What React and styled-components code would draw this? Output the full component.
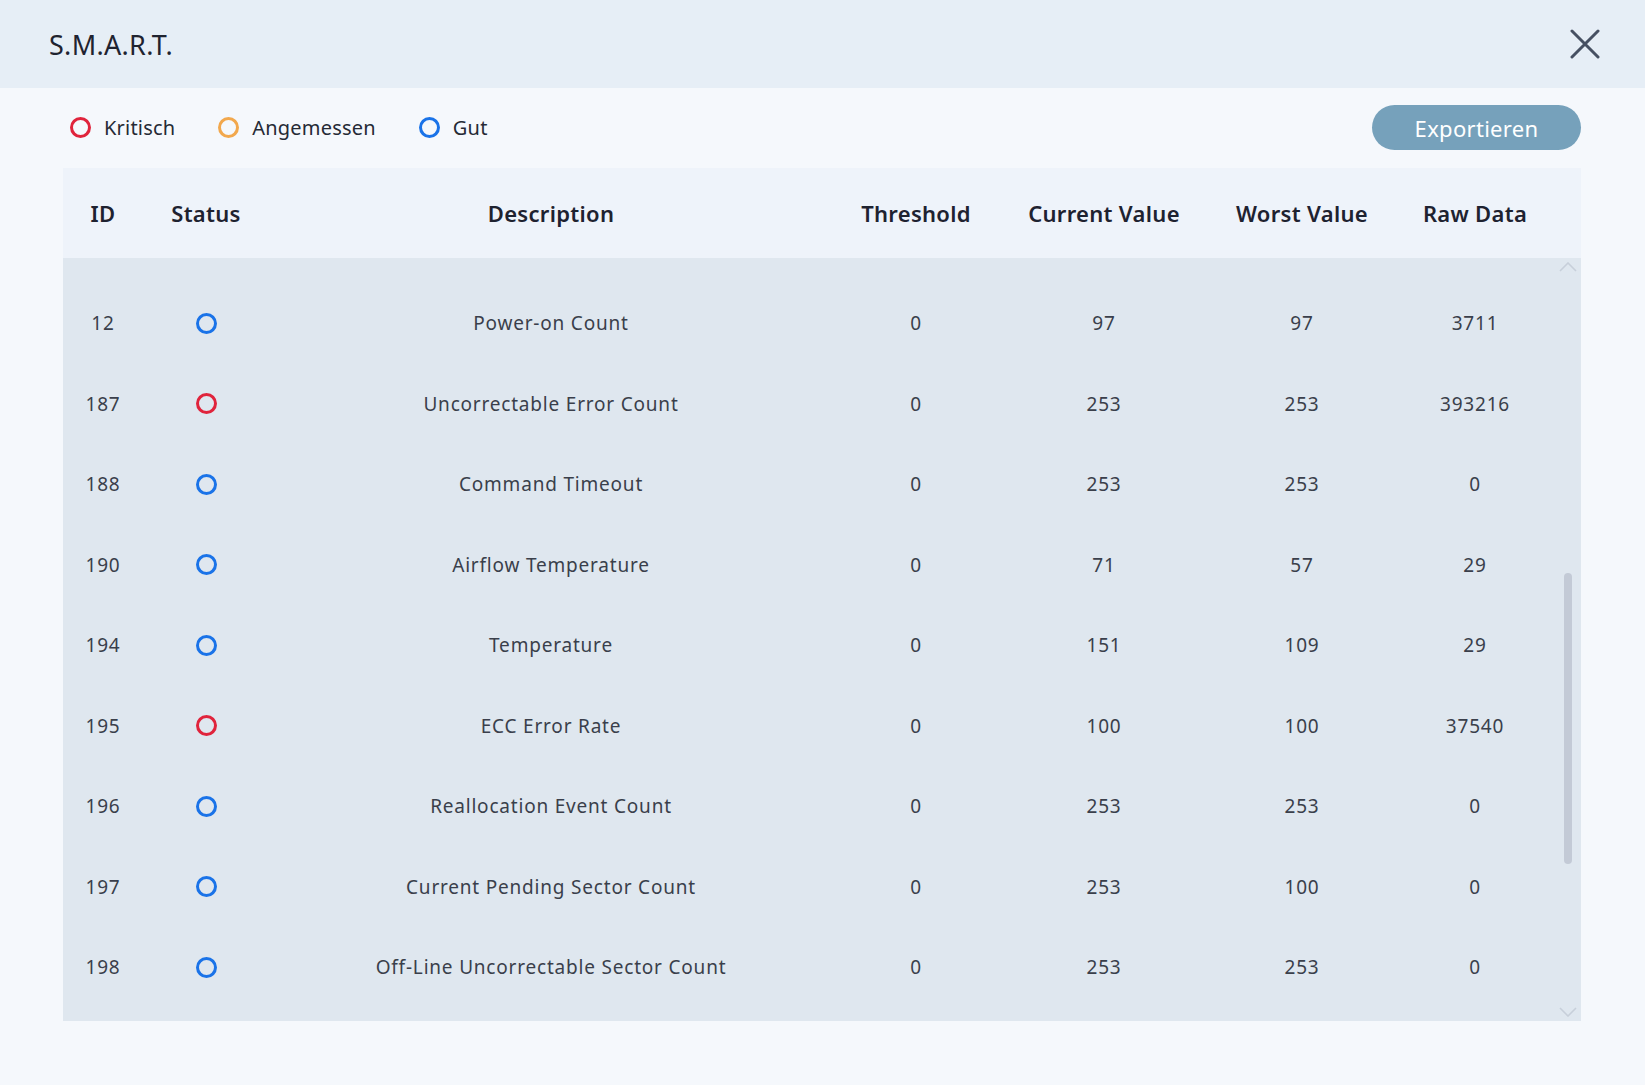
import React from "react";
import styled, { createGlobalStyle } from "styled-components";

const GlobalStyle = createGlobalStyle`
  html, body {
    margin: 0;
    padding: 0;
    background: #f5f8fc;
  }
  body {
    font-family: "Noto Sans", "Open Sans", sans-serif;
  }
`;

const Page = styled.div`
  width: 1645px;
  height: 1085px;
  display: flex;
  flex-direction: column;
  background: #f5f8fc;
  overflow: hidden;
`;

const TitleBar = styled.div`
  height: 88px;
  flex: none;
  display: flex;
  align-items: center;
  justify-content: space-between;
  padding: 0 44px 0 49px;
  background: #e6eef6;
`;

const Title = styled.h1`
  margin: 0;
  font-size: 27px;
  font-weight: 400;
  color: #1f2330;
  letter-spacing: 0.3px;
`;

const CloseButton = styled.button`
  width: 32px;
  height: 32px;
  padding: 0;
  border: none;
  background: none;
  display: flex;
  align-items: center;
  justify-content: center;
  cursor: pointer;
`;

const Body = styled.div`
  flex: 1;
  display: flex;
  flex-direction: column;
  padding: 17px 64px 0 63px;
`;

const Toolbar = styled.div`
  height: 45px;
  display: flex;
  align-items: center;
  justify-content: space-between;
  margin-bottom: 18px;
`;

const Legend = styled.div`
  display: flex;
  align-items: center;
  gap: 43px;
  padding-left: 7px;
`;

const LegendItem = styled.div`
  display: flex;
  align-items: center;
  gap: 13px;
  font-size: 20px;
  color: #252a35;
  letter-spacing: 0.2px;
`;

const Ring = styled.span`
  display: inline-block;
  box-sizing: border-box;
  width: ${(p) => p.size || 21}px;
  height: ${(p) => p.size || 21}px;
  border-radius: 50%;
  border: 3px solid ${(p) => p.color};
  flex: none;
`;

const ExportButton = styled.button`
  width: 209px;
  height: 45px;
  border: none;
  border-radius: 23px;
  background: #76a1bb;
  color: #ffffff;
  font-family: "Noto Sans", sans-serif;
  font-size: 22px;
  letter-spacing: 0.3px;
  cursor: pointer;
`;

const Table = styled.div`
  width: 1518px;
  height: 853px;
  display: flex;
  flex-direction: column;
`;

const columns = "80px 126px 564px 166px 210px 186px 160px 26px";

const HeadRow = styled.div`
  height: 90px;
  flex: none;
  display: grid;
  grid-template-columns: ${columns};
  align-items: center;
  background: #eef3fa;
`;

const HeadCell = styled.div`
  text-align: center;
  font-size: 22px;
  font-weight: 600;
  color: #1e2230;
  letter-spacing: 0.3px;
  white-space: nowrap;
`;

const ScrollArea = styled.div`
  flex: 1;
  display: flex;
  background: #dfe7ef;
  overflow: hidden;
`;

const Rows = styled.div`
  flex: 1;
  padding-top: 25px;
`;

const Row = styled.div`
  height: 80.5px;
  display: grid;
  grid-template-columns: ${columns.replace(" 26px", "")};
  align-items: center;
`;

const Cell = styled.div`
  display: flex;
  justify-content: center;
  font-size: 19px;
  color: #3a3f4b;
  letter-spacing: 0.8px;
  white-space: nowrap;
`;

const Gutter = styled.div`
  width: 26px;
  flex: none;
  display: flex;
  flex-direction: column;
  align-items: center;
  padding: 4px 0 4px;
`;

const Track = styled.div`
  flex: 1;
  width: 8px;
  position: relative;
`;

const Thumb = styled.div`
  position: absolute;
  left: 0;
  width: 8px;
  border-radius: 4px;
  background: #c3cad6;
`;

const Chevron = ({ down }) => (
  <svg width="18" height="10" viewBox="0 0 18 10">
    <path
      d={down ? "M1 1 L9 9 L17 1" : "M1 9 L9 1 L17 9"}
      fill="none"
      stroke="#c7cfda"
      strokeWidth="1.6"
    />
  </svg>
);

const STATUS = {
  bad: "#e0243c",
  fair: "#f2a84d",
  good: "#1a73e8",
};

const data = [
  { id: 12, status: "good", desc: "Power-on Count", th: 0, cur: 97, worst: 97, raw: 3711 },
  { id: 187, status: "bad", desc: "Uncorrectable Error Count", th: 0, cur: 253, worst: 253, raw: 393216 },
  { id: 188, status: "good", desc: "Command Timeout", th: 0, cur: 253, worst: 253, raw: 0 },
  { id: 190, status: "good", desc: "Airflow Temperature", th: 0, cur: 71, worst: 57, raw: 29 },
  { id: 194, status: "good", desc: "Temperature", th: 0, cur: 151, worst: 109, raw: 29 },
  { id: 195, status: "bad", desc: "ECC Error Rate", th: 0, cur: 100, worst: 100, raw: 37540 },
  { id: 196, status: "good", desc: "Reallocation Event Count", th: 0, cur: 253, worst: 253, raw: 0 },
  { id: 197, status: "good", desc: "Current Pending Sector Count", th: 0, cur: 253, worst: 100, raw: 0 },
  { id: 198, status: "good", desc: "Off-Line Uncorrectable Sector Count", th: 0, cur: 253, worst: 253, raw: 0 },
];

const headers = ["ID", "Status", "Description", "Threshold", "Current Value", "Worst Value", "Raw Data"];

const App = () => {
  // scroll position of the list, as fractions of the track
  const thumbTop = 0.41;
  const thumbSize = 0.396;

  return (
    <Page>
      <GlobalStyle />
      <TitleBar>
        <Title>S.M.A.R.T.</Title>
        <CloseButton aria-label="close">
          <svg width="30" height="30" viewBox="0 0 30 30">
            <path d="M2 2 L28 28 M28 2 L2 28" stroke="#465062" strokeWidth="3" strokeLinecap="round" />
          </svg>
        </CloseButton>
      </TitleBar>
      <Body>
        <Toolbar>
          <Legend>
            <LegendItem>
              <Ring color={STATUS.bad} />
              Kritisch
            </LegendItem>
            <LegendItem>
              <Ring color={STATUS.fair} />
              Angemessen
            </LegendItem>
            <LegendItem>
              <Ring color={STATUS.good} />
              Gut
            </LegendItem>
          </Legend>
          <ExportButton>Exportieren</ExportButton>
        </Toolbar>
        <Table>
          <HeadRow>
            {headers.map((h) => (
              <HeadCell key={h}>{h}</HeadCell>
            ))}
            <div />
          </HeadRow>
          <ScrollArea>
            <Rows>
              {data.map((r) => (
                <Row key={r.id}>
                  <Cell>{r.id}</Cell>
                  <Cell>
                    <Ring color={STATUS[r.status]} />
                  </Cell>
                  <Cell>{r.desc}</Cell>
                  <Cell>{r.th}</Cell>
                  <Cell>{r.cur}</Cell>
                  <Cell>{r.worst}</Cell>
                  <Cell>{r.raw}</Cell>
                </Row>
              ))}
            </Rows>
            <Gutter>
              <Chevron />
              <Track>
                <Thumb style={{ top: `${thumbTop * 100}%`, height: `${thumbSize * 100}%` }} />
              </Track>
              <Chevron down />
            </Gutter>
          </ScrollArea>
        </Table>
      </Body>
    </Page>
  );
};

export default App;
